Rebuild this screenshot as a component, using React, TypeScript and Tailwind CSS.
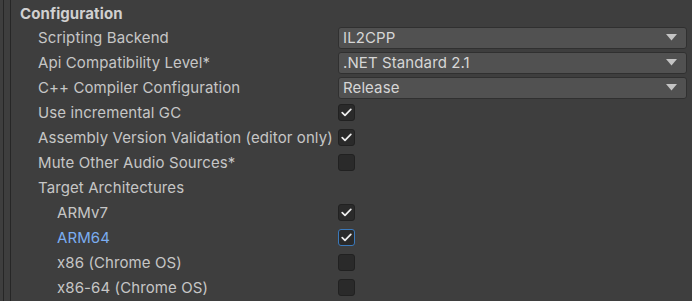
import React from 'react';

type Row =
  | { kind: 'dropdown'; label: string; value: string }
  | { kind: 'check'; label: string; checked: boolean; indent?: boolean; focused?: boolean }
  | { kind: 'label'; label: string };

const rows: Row[] = [
  { kind: 'dropdown', label: 'Scripting Backend', value: 'IL2CPP' },
  { kind: 'dropdown', label: 'Api Compatibility Level*', value: '.NET Standard 2.1' },
  { kind: 'dropdown', label: 'C++ Compiler Configuration', value: 'Release' },
  { kind: 'check', label: 'Use incremental GC', checked: true },
  { kind: 'check', label: 'Assembly Version Validation (editor only)', checked: true },
  { kind: 'check', label: 'Mute Other Audio Sources*', checked: false },
  { kind: 'label', label: 'Target Architectures' },
  { kind: 'check', label: 'ARMv7', checked: true, indent: true },
  { kind: 'check', label: 'ARM64', checked: true, indent: true, focused: true },
  { kind: 'check', label: 'x86 (Chrome OS)', checked: false, indent: true },
  { kind: 'check', label: 'x86-64 (Chrome OS)', checked: false, indent: true },
];

const Checkbox = ({ checked, focused }: { checked: boolean; focused?: boolean }) => (
  <div
    className={`w-[17px] h-[17px] rounded-[3px] bg-[#2a2a2a] border flex items-center justify-center ${
      focused ? 'border-[#3a79bb]' : 'border-[#212121]'
    }`}
  >
    {checked && (
      <svg width="11" height="9" viewBox="0 0 11 9" fill="none">
        <path d="M1.2 4.6 L4 7.3 L9.8 1.4" stroke="#eeeeee" strokeWidth="1.7" strokeLinecap="round" strokeLinejoin="round" />
      </svg>
    )}
  </div>
);

const Dropdown = ({ value }: { value: string }) => (
  <div className="w-[349px] h-[22px] rounded-[3px] bg-[#515151] border border-[#303030] flex items-center justify-between pl-[4px] pr-[9px]">
    <span className="text-[#d6d6d6] pt-px">{value}</span>
    <svg width="11" height="7" viewBox="0 0 11 7">
      <path d="M0 0 H11 L5.5 6.5 Z" fill="#c4c4c4" />
    </svg>
  </div>
);

export default function App() {
  return (
    <div
      className="w-[692px] h-[301px] bg-[#3e3e3e] flex overflow-hidden text-[15px] tracking-[0.1px] text-[#c6c6c6]"
      style={{ fontFamily: 'Inter, "Noto Sans", sans-serif' }}
    >
      <div className="w-[3px] shrink-0" />
      <div className="w-px shrink-0 bg-[#262626]" />
      <div className="w-[6px] shrink-0" />
      <div className="w-px shrink-0 bg-[#262626]" />
      <div className="flex-1 flex flex-col">
        <div className="h-[25px] pl-[9px] flex items-center pt-[3px] font-bold text-[#d0d0d0]">Configuration</div>
        {rows.map((r, i) => (
          <div key={i} className="h-[25px] flex items-center">
            <div className={`w-[327px] shrink-0 whitespace-nowrap pt-[2px] ${'indent' in r && r.indent ? 'pl-[46px]' : 'pl-[27px]'} ${
              'focused' in r && r.focused ? 'text-[#7badf0]' : ''
            }`}>
              {r.label}
            </div>
            {r.kind === 'dropdown' && <Dropdown value={r.value} />}
            {r.kind === 'check' && <Checkbox checked={r.checked} focused={r.focused} />}
          </div>
        ))}
      </div>
    </div>
  );
}
